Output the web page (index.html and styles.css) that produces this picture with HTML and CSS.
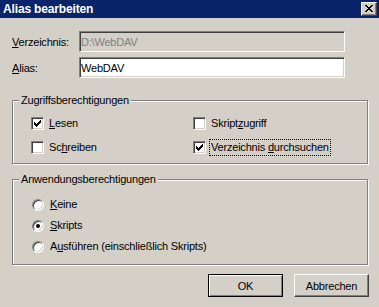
FILE: index.html
```html
<!DOCTYPE html>
<html>
    <head lang="de">
        <meta name="viewport" content="width=device-width, initial-scale=1" />
        <title>Alias bearbeiten</title>
        <link rel="stylesheet" href="styles.css">
    </head>
    <body>
        <div class="dialog">
            <div class="titlebar">
                <span class="title">Alias bearbeiten</span>
                <span class="close-btn">
                    <svg width="8" height="7" viewBox="0 0 8 7" shape-rendering="crispEdges">
                        <path fill="#000" d="M0 0h2v1h-2z M6 0h2v1h-2z M1 1h2v1h-2z M5 1h2v1h-2z M2 2h4v1h-4z M3 3h2v1h-2z M2 4h4v1h-4z M1 5h2v1h-2z M5 5h2v1h-2z M0 6h2v1h-2z M6 6h2v1h-2z"/>
                    </svg>
                </span>
            </div>

            <div class="content">
                <div class="field-row">
                    <span class="field-label"><u>V</u>erzeichnis:</span>
                    <div class="textbox disabled">D:\WebDAV</div>
                </div>
                <div class="field-row">
                    <span class="field-label"><u>A</u>lias:</span>
                    <div class="textbox">WebDAV</div>
                </div>

                <!-- ZUGRIFFSBERECHTIGUNGEN -->
                <fieldset class="group">
                    <legend>Zugriffsberechtigungen</legend>
                    <div class="check-grid">
                        <div class="option">
                            <span class="checkbox">
                                <svg width="7" height="7" viewBox="0 0 7 7" shape-rendering="crispEdges"><path fill="#000" d="M0 2h1v3h-1z M1 3h1v3h-1z M2 4h1v3h-1z M3 3h1v3h-1z M4 2h1v3h-1z M5 1h1v3h-1z M6 0h1v3h-1z"/></svg>
                            </span>
                            <span class="option-label"><u>L</u>esen</span>
                        </div>
                        <div class="option">
                            <span class="checkbox"></span>
                            <span class="option-label">Skript<u>z</u>ugriff</span>
                        </div>
                        <div class="option">
                            <span class="checkbox"></span>
                            <span class="option-label">Sc<u>h</u>reiben</span>
                        </div>
                        <div class="option">
                            <span class="checkbox">
                                <svg width="7" height="7" viewBox="0 0 7 7" shape-rendering="crispEdges"><path fill="#000" d="M0 2h1v3h-1z M1 3h1v3h-1z M2 4h1v3h-1z M3 3h1v3h-1z M4 2h1v3h-1z M5 1h1v3h-1z M6 0h1v3h-1z"/></svg>
                            </span>
                            <span class="option-label focused">Verzeichnis <u>d</u>urchsuchen</span>
                        </div>
                    </div>
                </fieldset>

                <!-- ANWENDUNGSBERECHTIGUNGEN -->
                <fieldset class="group group-app">
                    <legend>Anwendungsberechtigungen</legend>
                    <div class="radio-list">
                        <div class="option">
                            <span class="radio"></span>
                            <span class="option-label"><u>K</u>eine</span>
                        </div>
                        <div class="option">
                            <span class="radio selected"></span>
                            <span class="option-label"><u>S</u>kripts</span>
                        </div>
                        <div class="option">
                            <span class="radio"></span>
                            <span class="option-label">A<u>u</u>sführen (einschließlich Skripts)</span>
                        </div>
                    </div>
                </fieldset>

                <div class="buttons">
                    <span class="btn btn-default">OK</span>
                    <span class="btn">Abbrechen</span>
                </div>
            </div>
        </div>
    </body>
</html>
```

FILE: styles.css
```css
body {
    margin: 0;
    background-color: #d4d0c8;
    font-family: "Liberation Sans", Arial, sans-serif;
    font-size: 11px;
    letter-spacing: -0.2px;
    color: #000;
}

.dialog {
    width: 379px;
    height: 307px;
    background-color: #d4d0c8;
    overflow: hidden;
}

/* TITLE BAR */

.titlebar {
    height: 18px;
    background-color: #0a246a;
    display: flex;
    align-items: center;
    justify-content: space-between;
    padding: 0 2px 0 3px;
}
.title {
    color: #fff;
    font-weight: bold;
    font-size: 12px;
    letter-spacing: -0.15px;
}
.close-btn {
    width: 16px;
    height: 14px;
    box-sizing: border-box;
    display: flex;
    justify-content: center;
    align-items: center;
    padding-bottom: 1px;
    background-color: #d4d0c8;
    border: 1px solid;
    border-color: #fff #404040 #404040 #fff;
    box-shadow: inset -1px -1px 0 #808080;
}
.close-btn svg {
    display: block;
}

/* FORM */

.content {
    padding: 13px 11px 0 12px;
}

.field-row {
    display: flex;
    align-items: center;
    height: 21px;
}
.field-row + .field-row {
    margin-top: 5px;
}
.field-label {
    width: 67px;
}
.textbox {
    width: 266px;
    height: 21px;
    box-sizing: border-box;
    display: flex;
    align-items: center;
    padding-left: 1px;
    background-color: #fff;
    border: 1px solid;
    border-color: #808080 #fff #fff #808080;
    box-shadow: inset 1px 1px 0 #404040, inset -1px -1px 0 #d4d0c8;
}
.textbox.disabled {
    background-color: #d4d0c8;
    color: #808080;
}

/* GROUP BOXES */

.group {
    margin: 16px 0 0 0;
    padding: 0;
    min-inline-size: 0;
    border: 1px solid #808080;
    box-shadow: 1px 1px 0 #fff, inset 1px 1px 0 #fff;
}
.group legend {
    margin-left: 6px;
    padding: 0 2px;
    line-height: 13px;
    background-color: #d4d0c8;
}
.group-app {
    margin-top: 9px;
}

.check-grid {
    display: grid;
    grid-template-columns: 162px 1fr;
    row-gap: 7px;
    padding: 8px 0 7px 18px;
}
.radio-list {
    display: flex;
    flex-direction: column;
    gap: 4px;
    padding: 10px 0 9px 19px;
}

.option {
    display: flex;
    align-items: center;
    height: 17px;
}
.option-label {
    line-height: 13px;
    padding: 1px;
    border: 1px dotted transparent;
}
.option-label.focused {
    border-color: #000;
}

.checkbox {
    width: 13px;
    height: 13px;
    box-sizing: border-box;
    margin-right: 3px;
    display: flex;
    justify-content: center;
    align-items: center;
    background-color: #fff;
    border: 1px solid;
    border-color: #808080 #fff #fff #808080;
    box-shadow: inset 1px 1px 0 #404040, inset -1px -1px 0 #d4d0c8;
}

.radio {
    width: 12px;
    height: 12px;
    box-sizing: border-box;
    margin-right: 4px;
    position: relative;
    border-radius: 50%;
    background-color: #fff;
    border: 1px solid;
    border-color: #808080 #fff #fff #808080;
    box-shadow: inset 1px 1px 0 #404040, inset -1px -1px 0 #d4d0c8;
}
.radio.selected::after {
    content: "";
    position: absolute;
    left: 3px;
    top: 3px;
    width: 4px;
    height: 4px;
    border-radius: 50%;
    background-color: #000;
}

/* BUTTONS */

.buttons {
    display: flex;
    justify-content: flex-end;
    gap: 11px;
    margin-top: 9px;
    margin-right: -1px;
}
.btn {
    width: 75px;
    height: 23px;
    box-sizing: border-box;
    display: flex;
    justify-content: center;
    align-items: center;
    background-color: #d4d0c8;
    border: 1px solid;
    border-color: #fff #404040 #404040 #fff;
    box-shadow: inset -1px -1px 0 #808080;
}
.btn-default {
    border-color: #000;
    box-shadow: inset 1px 1px 0 #fff, inset -1px -1px 0 #808080;
}
```
